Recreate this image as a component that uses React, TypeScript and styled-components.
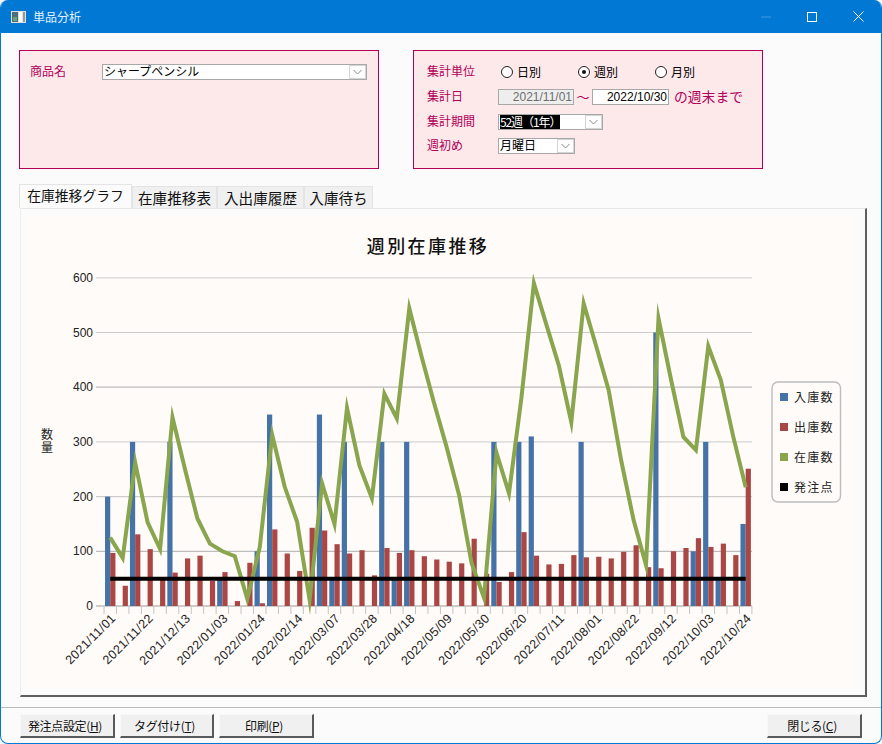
import React from "react";
import styled, { createGlobalStyle } from "styled-components";

const GOTHIC = `"Noto Sans CJK JP", "Liberation Sans", sans-serif`;
const PINK = "#b00058";

const Global = createGlobalStyle`
  html, body { margin: 0; padding: 0; background: #f4f7fb; }
  body { font-family: ${GOTHIC}; font-size: 12px; color: #000; }
  * { box-sizing: border-box; }
`;

const Win = styled.div`
  width: 882px;
  height: 744px;
  display: flex;
  flex-direction: column;
  background: #fbfbfb;
  border: 1px solid #0078d4;
  border-top: 0;
  border-radius: 8px;
  overflow: hidden;
`;
const TitleBar = styled.header`
  height: 33px;
  flex: none;
  margin: 0 -1px;
  background: #0078d4;
  color: #e6f1fb;
  display: flex;
  align-items: center;
  padding: 0 1px 0 11px;
`;
const TitleText = styled.span`
  font-size: 12px;
  flex: 1;
  line-height: 1;
  margin-left: 7px;
`;
const WinBtn = styled.span`
  width: 46px;
  height: 33px;
  display: flex;
  align-items: center;
  justify-content: center;
`;
const Top = styled.div`
  display: flex;
  gap: 34px;
  padding: 17px 0 0 18px;
  height: 136px;
  flex: none;
`;
const Box = styled.section<{ $w: number }>`
  width: ${(p) => p.$w}px;
  height: 119px;
  background: #fde8ea;
  border: 1px solid ${PINK};
`;
const ProductBox = styled(Box)`
  display: flex;
  align-items: flex-start;
  padding: 13px 0 0 10px;
`;
const Label = styled.span`
  color: ${PINK};
  font-size: 12px;
  line-height: 14px;
  height: 16px;
`;
const ProductLabel = styled(Label)`
  width: 72px;
`;
const Select = styled.div<{ $w: number }>`
  width: ${(p) => p.$w}px;
  height: 16px;
  background: #fff;
  border: 1px solid #a8a8a8;
  display: flex;
  align-items: flex-start;
  font-size: 12px;
  line-height: 12px;
  white-space: nowrap;
  padding-left: 1px;
`;
const SelectText = styled.span`
  flex: 1;
  min-width: 0;
  color: #000;
`;
const Selected = styled.span`
  background: #000;
  color: #fff;
  display: inline-block;
  height: 14px;
  line-height: 13px;
  letter-spacing: -1.1px;
  vertical-align: top;
`;
const Arrow = styled.span`
  width: 17px;
  height: 14px;
  flex: none;
  background: #fdfdfd;
  border: 1px solid #d4d4d4;
  display: flex;
  align-items: center;
  justify-content: center;
`;
const SumBox = styled(Box)`
  padding: 8px 0 0 13px;
  display: grid;
  grid-template-columns: 71px 1fr;
  grid-template-rows: 25px 26px 24px 24px;
  align-items: center;
`;
const Radios = styled.div`
  display: flex;
  padding-left: 3px;
`;
const RadioItem = styled.span`
  width: 77px;
  display: flex;
  align-items: center;
  gap: 4px;
  font-size: 12px;
  line-height: 14px;
  height: 16px;
`;
const RadioMark = styled.span<{ $on?: boolean }>`
  width: 12px;
  height: 12px;
  margin-top: 1px;
  border-radius: 50%;
  border: 1px solid #222;
  background: #fff;
  display: flex;
  align-items: center;
  justify-content: center;
  &::after {
    content: "";
    width: 4px;
    height: 4px;
    border-radius: 50%;
    background: ${(p) => (p.$on ? "#111" : "transparent")};
  }
`;
const DateRow = styled.div`
  display: flex;
  align-items: center;
  height: 16px;
`;
const DateField = styled.span<{ $off?: boolean }>`
  width: ${(p) => (p.$off ? 76 : 77)}px;
  height: 16px;
  border: 1px solid #a8a8a8;
  background: ${(p) => (p.$off ? "#eeeeee" : "#fff")};
  color: ${(p) => (p.$off ? "#6d6d6d" : "#000")};
  font-family: "Liberation Sans", sans-serif;
  font-size: 12px;
  line-height: 14px;
  text-align: right;
  padding-right: 1px;
`;
const Tilde = styled.span`
  width: 18px;
  color: ${PINK};
  font-size: 13px;
  line-height: 16px;
  text-align: center;
`;
const Until = styled.span`
  margin-left: 5px;
  color: ${PINK};
  font-size: 13.8px;
  line-height: 14px;
  height: 16px;
  white-space: nowrap;
`;
const Tabs = styled.nav`
  display: flex;
  align-items: flex-end;
  height: 24px;
  margin: 15px 0 0 18px;
  flex: none;
`;
const Tab = styled.span<{ $w: number; $on?: boolean }>`
  width: ${(p) => p.$w}px;
  height: ${(p) => (p.$on ? 24 : 22)}px;
  background: ${(p) => (p.$on ? "#fbfbfb" : "#f0f0f0")};
  border: 1px solid #e4e4e4;
  border-bottom: 0;
  font-size: ${(p) => (p.$on ? 13.8 : 14.6)}px;
  line-height: 21px;
  text-align: center;
  white-space: nowrap;
  color: #111;
`;
const TabPanel = styled.div`
  height: 489px;
  flex: none;
  margin-left: 19px;
  width: 847px;
  padding: 7px 13px 7px 7px;
  border-top: 1px solid #e6e6e6;
  border-left: 1px solid #eeeeee;
  border-right: 2px solid #5e5e5e;
  border-bottom: 2px solid #5e5e5e;
`;
const ChartArea = styled.div`
  width: 824px;
  height: 472px;
  background: #fffbf8;
`;
const Footer = styled.footer`
  margin-top: 10px;
  border-top: 1px solid #b9b9b9;
  padding: 6px 19px 0 19px;
  display: flex;
  gap: 5px;
`;
const Btn = styled.button<{ $w?: number }>`
  width: ${(p) => p.$w ?? 95}px;
  height: 24px;
  padding: 0 4px 0 0;
  background: #f0f0f0;
  border: 1px solid #f8f8f8;
  border-right: 2px solid #5a5a5a;
  border-bottom: 2px solid #5a5a5a;
  font-family: ${GOTHIC};
  font-size: 12px;
  letter-spacing: -0.35px;
  color: #111;
  line-height: 18px;
`;
const Spacer = styled.div`
  flex: 1;
`;

const ChartTitle = styled.text`
  font-family: ${GOTHIC};
  font-size: 18px;
  font-weight: 500;
  letter-spacing: 2.4px;
  fill: #111;
`;
const AxisText = styled.text`
  font-family: "Liberation Sans", sans-serif;
  font-size: 12px;
  fill: #222;
`;
const DateText = styled(AxisText)`
  font-size: 12.5px;
  letter-spacing: 0.35px;
`;
const CjkText = styled.text`
  font-family: ${GOTHIC};
  font-size: 12px;
  fill: #222;
`;
const VerticalText = styled(CjkText)`
  writing-mode: vertical-rl;
  letter-spacing: 1.5px;
`;
const LegendText = styled(CjkText)`
  letter-spacing: 1.2px;
`;

const X0 = 104;
const STEP = 12.46;
const Y0 = 606;
const SCALE = 0.547;
const BW = 5.2;

const inbound: Record<number, number> = {
  0: 200, 2: 300, 5: 300, 9: 50, 12: 100, 13: 350, 17: 350, 18: 50, 19: 300, 22: 300, 23: 50,
  24: 300, 31: 300, 33: 300, 34: 310, 38: 300, 44: 500, 47: 100, 48: 300, 49: 50, 51: 150,
};
const outbound = [
  97, 37, 131, 104, 48, 61, 87, 92, 46, 62, 9, 79, 5, 140, 96, 64, 143, 138, 113, 96, 102, 56, 106,
  97, 102, 91, 85, 81, 78, 123, 59, 44, 62, 135, 92, 76, 77, 93, 89, 90, 87, 99, 111, 71, 69, 100,
  106, 124, 108, 114, 93, 251,
];
const stock = [
  125, 88, 262, 153, 104, 345, 250, 160, 114, 100, 91, 13, 108, 313, 218, 154, 11, 224, 150, 362, 257,
  197, 388, 343, 544, 455, 370, 290, 203, 78, 15, 280, 206, 380, 590, 515, 440, 336, 553, 475, 395,
  267, 157, 75, 526, 415, 309, 285, 475, 413, 310, 217,
];
const dates = [
  "2021/11/01", "2021/11/22", "2021/12/13", "2022/01/03", "2022/01/24", "2022/02/14", "2022/03/07",
  "2022/03/28", "2022/04/18", "2022/05/09", "2022/05/30", "2022/06/20", "2022/07/11", "2022/08/01",
  "2022/08/22", "2022/09/12", "2022/10/03", "2022/10/24",
];
const grid: [number, string][] = [
  [600, "#d8d8d8"], [500, "#cccccc"], [400, "#bdbdbd"], [300, "#d6d6d6"], [200, "#cccccc"], [100, "#bdbdbd"],
];
const legend: [string, string][] = [
  ["#4572a7", "入庫数"], ["#aa4643", "出庫数"], ["#89a54e", "在庫数"], ["#000000", "発注点"],
];

const cx = (i: number) => X0 + STEP * (i + 0.5);
const vy = (v: number) => Y0 - v * SCALE;

function Chart() {
  return (
    <svg width={824} height={472} viewBox="28 216 824 472" style={{ display: "block" }}>
      <ChartTitle x={428} y={253} textAnchor="middle">週別在庫推移</ChartTitle>
      {grid.map(([v, c]) => (
        <line key={v} x1={96} x2={752} y1={vy(v)} y2={vy(v)} stroke={c} strokeWidth={1.2} />
      ))}
      {[600, 500, 400, 300, 200, 100, 0].map((v) => (
        <AxisText key={v} x={93} y={vy(v) + 4} textAnchor="end">{v}</AxisText>
      ))}
      <VerticalText x={47} y={428}>数量</VerticalText>
      <line x1={96} x2={752} y1={Y0} y2={Y0} stroke="#bdbdbd" strokeWidth={1.4} />
      {Array.from({ length: 53 }, (_, i) => (
        <line key={i} x1={X0 + STEP * i} x2={X0 + STEP * i} y1={Y0} y2={614} stroke="#c4c4c4" />
      ))}
      {outbound.map((_, i) =>
        inbound[i] ? (
          <rect key={i} x={cx(i) - BW} y={vy(inbound[i])} width={BW} height={inbound[i] * SCALE} fill="#4572a7" />
        ) : null
      )}
      {outbound.map((v, i) => (
        <rect key={i} x={cx(i)} y={vy(v)} width={BW} height={v * SCALE} fill="#aa4643" />
      ))}
      <polyline
        points={stock.map((v, i) => `${cx(i).toFixed(1)},${vy(v).toFixed(1)}`).join(" ")}
        fill="none"
        stroke="#89a54e"
        strokeWidth={4}
        strokeLinejoin="miter"
        strokeMiterlimit={10}
      />
      <line x1={cx(0)} x2={cx(51)} y1={vy(50)} y2={vy(50)} stroke="#000" strokeWidth={4} />
      {dates.map((d, k) => (
        <DateText
          key={d}
          textAnchor="end"
          transform={`translate(${X0 + STEP * (k * 3) + 12.5} 619) rotate(-45)`}
        >
          {d}
        </DateText>
      ))}
      <rect x={772} y={382} width={68.5} height={120} rx={6} fill="#fffbf8" stroke="#bdbdbd" strokeWidth={1.4} />
      {legend.map(([c, t], i) => (
        <g key={t}>
          <rect x={780} y={393 + i * 30} width={8} height={8} fill={c} />
          <LegendText x={794} y={401.5 + i * 30}>{t}</LegendText>
        </g>
      ))}
    </svg>
  );
}

const Chevron = () => (
  <svg width={9} height={6} viewBox="0 0 9 6">
    <path d="M0.5 1 L4.5 5 L8.5 1" fill="none" stroke="#8a8a8a" strokeWidth={1} />
  </svg>
);

const AppIcon = () => (
  <svg width={15} height={12} viewBox="0 0 15 12">
    <rect x={0} y={0} width={15} height={12} fill="#e0e0e0" />
    <rect x={1} y={1} width={6} height={10} fill="#4a6f78" />
    <rect x={2} y={6} width={4} height={4} fill="#6aa36f" />
    <rect x={8} y={1} width={3} height={10} fill="#fdfdfd" />
    <rect x={12} y={1} width={2} height={10} fill="#9a9a9a" />
  </svg>
);

export default function App() {
  return (
    <Win>
      <Global />
      <TitleBar>
        <AppIcon />
        <TitleText>単品分析</TitleText>
        <WinBtn>
          <svg width={10} height={2} viewBox="0 0 10 2"><path d="M0 1H10" stroke="#3f98e0" /></svg>
        </WinBtn>
        <WinBtn>
          <svg width={10} height={10} viewBox="0 0 10 10"><rect x={0.5} y={0.5} width={9} height={9} fill="none" stroke="#fff" /></svg>
        </WinBtn>
        <WinBtn>
          <svg width={11} height={11} viewBox="0 0 11 11"><path d="M0.5 0.5L10.5 10.5M10.5 0.5L0.5 10.5" stroke="#fff" /></svg>
        </WinBtn>
      </TitleBar>
      <Top>
        <ProductBox $w={360}>
          <ProductLabel>商品名</ProductLabel>
          <Select $w={265}>
            <SelectText>シャープペンシル</SelectText>
            <Arrow><Chevron /></Arrow>
          </Select>
        </ProductBox>
        <SumBox $w={350}>
          <Label>集計単位</Label>
          <Radios>
            <RadioItem><RadioMark />日別</RadioItem>
            <RadioItem><RadioMark $on />週別</RadioItem>
            <RadioItem><RadioMark />月別</RadioItem>
          </Radios>
          <Label>集計日</Label>
          <DateRow>
            <DateField $off>2021/11/01</DateField>
            <Tilde>～</Tilde>
            <DateField>2022/10/30</DateField>
            <Until>の週末まで</Until>
          </DateRow>
          <Label>集計期間</Label>
          <Select $w={105}>
            <SelectText><Selected>52週（1年）</Selected></SelectText>
            <Arrow><Chevron /></Arrow>
          </Select>
          <Label>週初め</Label>
          <Select $w={77}>
            <SelectText>月曜日</SelectText>
            <Arrow><Chevron /></Arrow>
          </Select>
        </SumBox>
      </Top>
      <Tabs>
        <Tab $w={113} $on>在庫推移グラフ</Tab>
        <Tab $w={85}>在庫推移表</Tab>
        <Tab $w={87}>入出庫履歴</Tab>
        <Tab $w={69}>入庫待ち</Tab>
      </Tabs>
      <TabPanel>
        <ChartArea><Chart /></ChartArea>
      </TabPanel>
      <Footer>
        <Btn>発注点設定(<u>H</u>)</Btn>
        <Btn $w={94}>タグ付け(<u>T</u>)</Btn>
        <Btn>印刷(<u>P</u>)</Btn>
        <Spacer />
        <Btn>閉じる(<u>C</u>)</Btn>
      </Footer>
    </Win>
  );
}
